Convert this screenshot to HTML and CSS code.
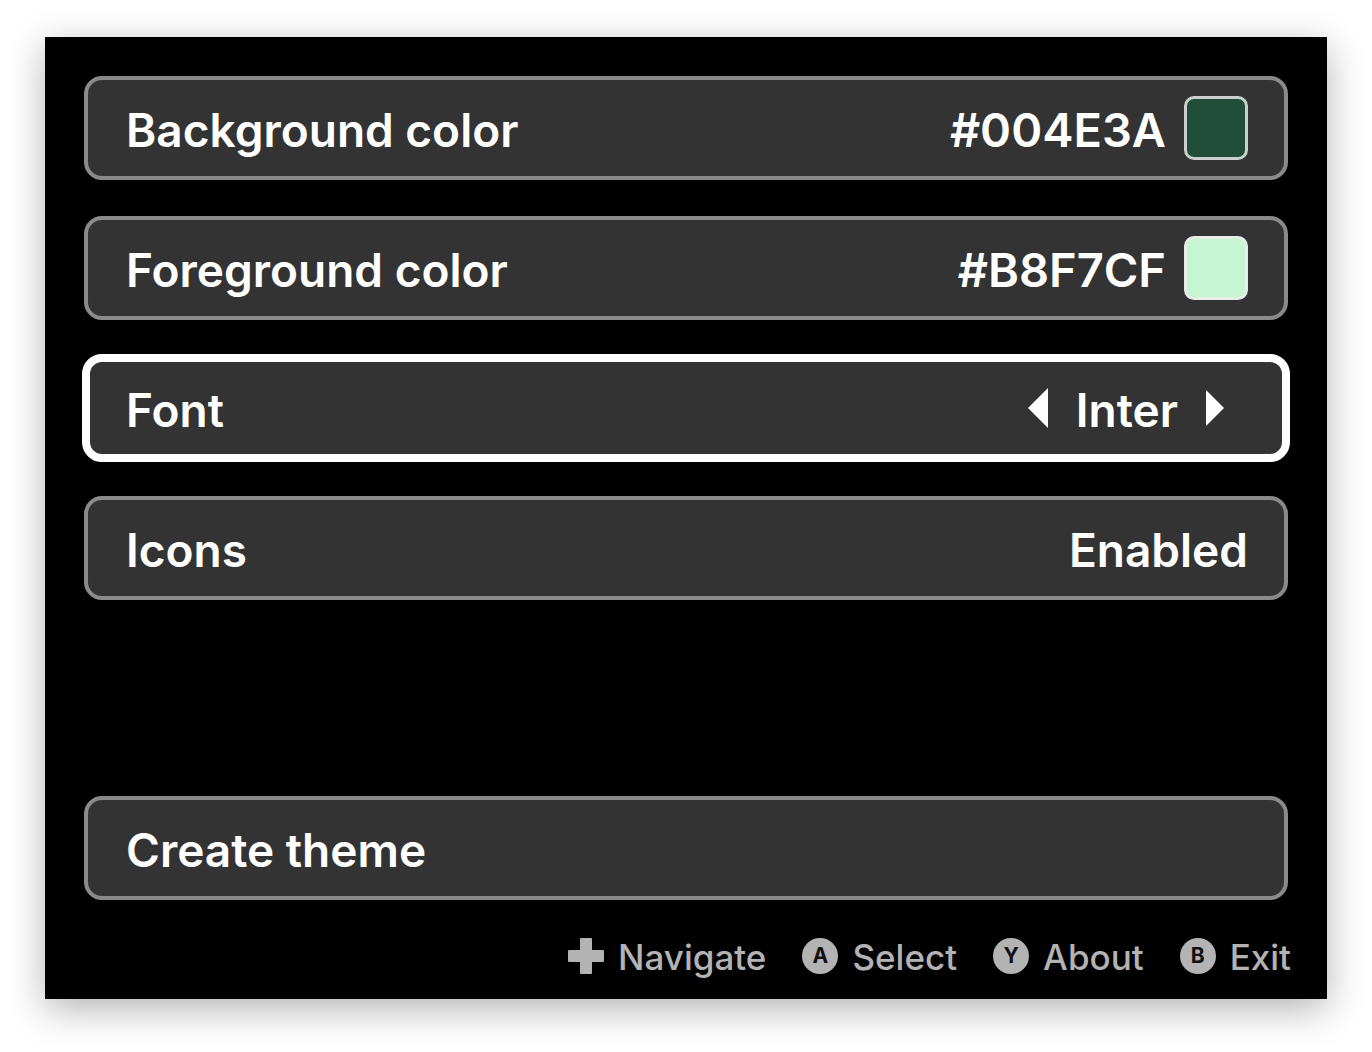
FILE: index.html
```html
<!DOCTYPE html>
<html lang="en">
<head>
<meta charset="utf-8">
<meta name="viewport" content="width=device-width, initial-scale=1">
<title>Theme settings</title>
<link rel="stylesheet" href="styles.css">
</head>
<body>
<main class="screen">
  <div class="menu">
    <button class="row" type="button">
      <span class="text">Background color</span>
      <span class="value"><span class="text hex">#004E3A</span> <span class="swatch swatch-background"></span></span>
    </button>
    <button class="row" type="button">
      <span class="text">Foreground color</span>
      <span class="value"><span class="text hex">#B8F7CF</span> <span class="swatch swatch-foreground"></span></span>
    </button>
    <div class="row row-selected" role="group" aria-labelledby="font-label">
      <span class="text" id="font-label">Font</span>
      <span class="stepper">
        <button class="arrow" type="button" aria-label="Previous font"><svg width="20" height="40" viewBox="0 0 20 40"><path d="M20 0v40L0 20z"/></svg></button>
        <output class="text">Inter</output>
        <button class="arrow" type="button" aria-label="Next font"><svg width="18" height="36" viewBox="0 0 18 36"><path d="M0 0v36l18-18z"/></svg></button>
      </span>
    </div>
    <button class="row" type="button">
      <span class="text">Icons</span>
      <span class="value"><span class="text">Enabled</span></span>
    </button>
  </div>
  <button class="row row-create" type="button"><span class="text">Create theme</span></button>
  <footer class="hints">
    <span class="hint"><svg width="36" height="36" viewBox="0 0 36 36" aria-hidden="true"><path d="M13 0h10q1 0 1 1v11h11q1 0 1 1v10q0 1-1 1H24v11q0 1-1 1H13q-1 0-1-1V24H1q-1 0-1-1V13q0-1 1-1h11V1q0-1 1-1z"/></svg>Navigate</span>
    <span class="hint"><span class="key">A</span>Select</span>
    <span class="hint"><span class="key">Y</span>About</span>
    <span class="hint"><span class="key">B</span>Exit</span>
  </footer>
</main>
</body>
</html>
```
FILE: styles.css
```css
* {
  box-sizing: border-box;
}

body {
  display: flex;
  min-height: 100vh;
  margin: 0;
  padding: 37px 45px 53px;
  background: #fff;
  font-family: Inter, "Liberation Sans", sans-serif;
}

button {
  font: inherit;
  color: inherit;
}

.screen {
  display: flex;
  flex: 1;
  flex-direction: column;
  padding: 39px 39px 19px;
  background: #000;
  box-shadow: 0 10px 36px rgba(0, 0, 0, 0.3);
}

.menu {
  display: flex;
  flex-direction: column;
  gap: 36px;
}

.row {
  display: flex;
  align-items: center;
  justify-content: space-between;
  min-height: 104px;
  padding: 0 36px 0 38px;
  border: 4px solid #8a8a8a;
  border-radius: 18px;
  background: #333;
  color: #fff;
  font-size: 46px;
  font-weight: 600;
  line-height: 60px;
  text-align: left;
}

.text {
  padding-top: 4px;
}

.hex {
  font-size: 47px;
}

.row-selected {
  min-height: 108px;
  margin: -2px;
  padding: 0 34px 0 36px;
  border: 8px solid #fff;
  border-radius: 20px;
}

.row-create {
  margin-top: auto;
}

.value {
  display: flex;
  align-items: center;
  gap: 18px;
}

.swatch {
  width: 64px;
  height: 64px;
  border: 3px solid #c8cfcc;
  border-radius: 10px;
}

.swatch-background {
  background: #1f4d3a;
}

.swatch-foreground {
  border-color: #e6efe9;
  background: #c5f5d3;
}

.stepper {
  display: flex;
  align-items: center;
  gap: 28px;
  padding-right: 24px;
}

.arrow {
  display: flex;
  padding: 0;
  border: 0;
  background: none;
}

.arrow svg {
  fill: #fff;
}

.hints {
  display: flex;
  justify-content: flex-end;
  gap: 36px;
  margin: 35px -3px 0 0;
  color: #b3b3b3;
  font-size: 35px;
  font-weight: 500;
  line-height: 45px;
}

.hint {
  display: flex;
  align-items: center;
  gap: 14px;
}

.hint svg,
.key {
  margin-bottom: 4px;
}

.hint svg {
  fill: #b3b3b3;
}

.key {
  width: 36px;
  height: 36px;
  border-radius: 50%;
  background: #b3b3b3;
  color: #111;
  font-size: 21px;
  font-weight: 700;
  line-height: 36px;
  text-align: center;
}
```
